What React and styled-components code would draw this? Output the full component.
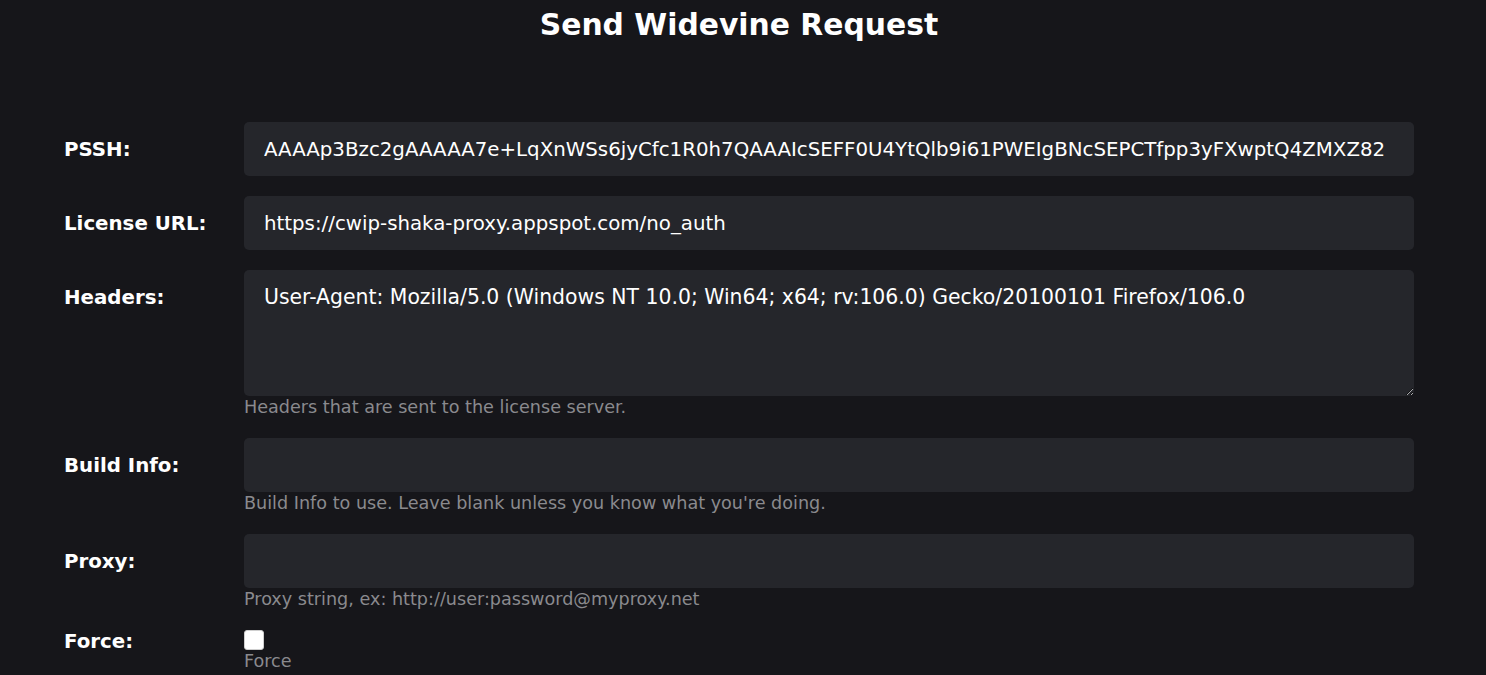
import React from "react";
import styled, { createGlobalStyle } from "styled-components";

const Global = createGlobalStyle`
  html, body { margin: 0; padding: 0; background: #16161a; }
  body { font-family: "DejaVu Sans", Verdana, sans-serif; color: #ffffff; }
  * { box-sizing: border-box; }
`;

const Page = styled.div`
  padding: 0 72px 0 64px;
`;

const Title = styled.h1`
  margin: 0;
  padding-top: 7px;
  height: 122px;
  text-align: center;
  font-size: 29.8px;
  line-height: 36px;
  font-weight: bold;
`;

const Form = styled.div`
  display: grid;
  grid-template-columns: 180px 1fr;
  row-gap: 20px;
`;

const Label = styled.label`
  font-weight: bold;
  font-size: 19.8px;
  line-height: 24px;
  padding-top: ${(p) => (p.$top != null ? p.$top : 16)}px;
`;

const Field = styled.div`
  display: flex;
  flex-direction: column;
`;

const TextInput = styled.input`
  width: 100%;
  height: 54px;
  border: none;
  border-radius: 5px;
  background: #25262b;
  color: #ffffff;
  font-family: "DejaVu Sans", Verdana, sans-serif;
  font-size: 19.8px;
  padding: 0 19px 0 20px;
  outline: none;
`;

const TextArea = styled.textarea`
  width: 100%;
  height: 126px;
  border: none;
  border-radius: 5px;
  background: #25262b;
  color: #ffffff;
  font-family: "DejaVu Sans", Verdana, sans-serif;
  font-size: 20.4px;
  line-height: 24px;
  padding: 15px 20px;
  outline: none;
  resize: vertical;
  display: block;
  color-scheme: dark;
`;

const Help = styled.div`
  color: #8a8a8e;
  font-size: 17.6px;
  line-height: 22px;
`;

const Check = styled.input`
  appearance: none;
  margin: 0;
  width: 20px;
  height: 20px;
  border-radius: 3px;
  background: #ffffff;
  border: 1px solid #cfcfcf;
`;

export default function App() {
  return (
    <Page>
      <Global />
      <Title>Send Widevine Request</Title>
      <Form>
        <Label>PSSH:</Label>
        <Field>
          <TextInput
            readOnly
            value="AAAAp3Bzc2gAAAAA7e+LqXnWSs6jyCfc1R0h7QAAAIcSEFF0U4YtQlb9i61PWEIgBNcSEPCTfpp3yFXwptQ4ZMXZ82"
          />
        </Field>

        <Label>License URL:</Label>
        <Field>
          <TextInput readOnly value="https://cwip-shaka-proxy.appspot.com/no_auth" />
        </Field>

        <Label>Headers:</Label>
        <Field>
          <TextArea
            readOnly
            value="User-Agent: Mozilla/5.0 (Windows NT 10.0; Win64; x64; rv:106.0) Gecko/20100101 Firefox/106.0"
          />
          <Help>Headers that are sent to the license server.</Help>
        </Field>

        <Label>Build Info:</Label>
        <Field>
          <TextInput readOnly value="" />
          <Help>Build Info to use. Leave blank unless you know what you're doing.</Help>
        </Field>

        <Label>Proxy:</Label>
        <Field>
          <TextInput readOnly value="" />
          <Help>Proxy string, ex: http://user:password@myproxy.net</Help>
        </Field>

        <Label $top={0}>Force:</Label>
        <Field>
          <Check type="checkbox" />
          <Help>Force</Help>
        </Field>
      </Form>
    </Page>
  );
}
